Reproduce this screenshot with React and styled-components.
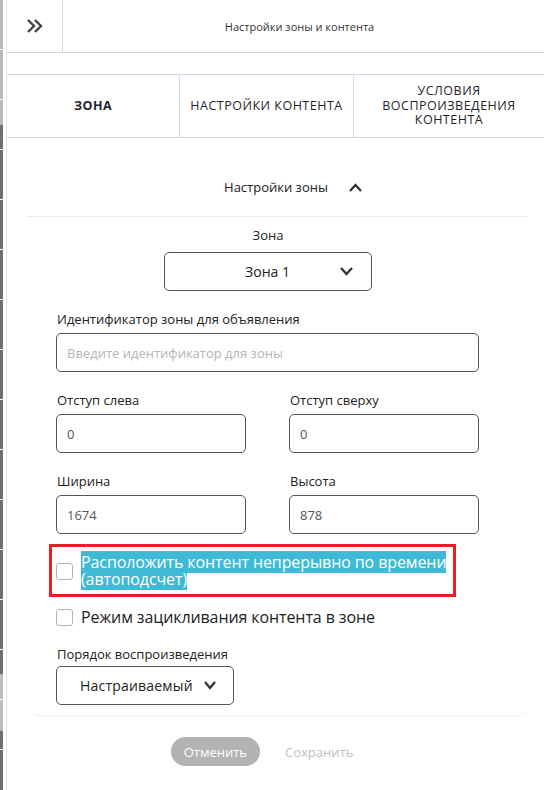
import React from 'react';
import styled, { createGlobalStyle } from 'styled-components';

const GlobalStyle = createGlobalStyle`
	body {
		margin: 0;
		background: #fff;
		font-family: "Open Sans", "Liberation Sans", sans-serif;
		color: #222;
	}
`;

const Page = styled.div`
	display: flex;
	min-height: 790px;
`;

// strip of the window lying behind the panel
const Rail = styled.div`
	width: 3px;
	margin-right: 3px;
	background:
		repeating-linear-gradient(to bottom, transparent 0 49px, #fff 49px 50px),
		linear-gradient(to bottom, #b9b9b9 0 125px, #707070 125px 674px, #bdbdbd 674px 731px, #707070 731px);
`;

const Panel = styled.div`
	flex: 1;
	border-left: 1px solid #dde2ee;
	display: flex;
	flex-direction: column;
`;

const Header = styled.div`
	display: flex;
	height: 52px;
	border-bottom: 1px solid #d3d8e6;
`;

const ToggleCell = styled.div`
	width: 55px;
	border-right: 1px solid #d3d8e6;
	display: flex;
	align-items: center;
	justify-content: center;
	color: #444;
`;

const Title = styled.div`
	flex: 1;
	display: flex;
	align-items: center;
	justify-content: center;
	font-size: 11px;
	color: #333;
	padding-right: 8px;
`;

const Spacer = styled.div`
	height: 21px;
	border-bottom: 1px solid #d3d8e6;
`;

const Tabs = styled.div`
	display: grid;
	grid-template-columns: 173px 174px 1fr;
	height: 62px;
	border-bottom: 1px solid #d3d8e6;
`;

const Tab = styled.div`
	display: flex;
	align-items: center;
	justify-content: center;
	text-align: center;
	font-size: 12.5px;
	line-height: 14.5px;
	text-transform: uppercase;
	font-weight: ${({ $active }) => ($active ? 700 : 400)};
	color: #1f1f2e;
	border-right: ${({ $last }) => ($last ? 'none' : '1px solid #d3d8e6')};
	letter-spacing: 0.5px;
`;

const Card = styled.div`
	margin: 0 15px 0 20px;
	border-radius: 12px;
	box-shadow: 0 2px 2px -1px rgba(0, 0, 0, 0.08);
`;

const SectionHead = styled.div`
	display: flex;
	align-items: center;
	justify-content: center;
	gap: 21px;
	padding: 40px 0 20px 30px;
	line-height: 18px;
	font-size: 13px;
	border-bottom: 1px solid #ececec;
	color: #222;
`;

const CardBody = styled.div`
	padding: 10px 50px 10px 29px;
	display: flex;
	flex-direction: column;
`;

const Field = styled.div`
	display: flex;
	flex-direction: column;
	align-items: ${({ $center }) => ($center ? 'center' : 'stretch')};
	margin-bottom: 20px;
`;

const Label = styled.label`
	font-size: 13px;
	line-height: 16px;
	margin-bottom: ${({ $gap }) => $gap || 6}px;
	padding-left: 1px;
	color: #222;
`;

const Row = styled.div`
	display: grid;
	grid-template-columns: 1fr 1fr;
	column-gap: 43px;
`;

const Input = styled.input`
	box-sizing: border-box;
	height: 39px;
	width: 100%;
	border: 1px solid #555;
	border-radius: 5px;
	padding: 0 10px;
	font-family: "Open Sans", "Liberation Sans", sans-serif;
	font-size: 13px;
	color: #555;
	outline: none;
	&::placeholder {
		color: #b5b5b5;
	}
`;

const ZoneSelect = styled.div`
	box-sizing: border-box;
	width: 208px;
	height: 39px;
	border: 1px solid #555;
	border-radius: 5px;
	display: grid;
	grid-template-columns: 1fr auto 1fr;
	align-items: center;
	font-size: 14px;
	color: #222;
	svg {
		justify-self: end;
		margin-right: 18px;
	}
`;

const OrderSelect = styled.div`
	box-sizing: border-box;
	width: 178px;
	height: 39px;
	border: 1px solid #555;
	border-radius: 5px;
	display: flex;
	align-items: center;
	gap: 11px;
	padding-left: 23px;
	font-size: 14px;
	letter-spacing: 0.2px;
	color: #222;
`;

const Annotated = styled.div`
	box-sizing: border-box;
	width: 407px;
	margin: -10px 0 0 -7px;
	border: 3px solid #ec1c24;
	padding: 7px 4px 6px 4px;
`;

const CheckRow = styled.div`
	display: flex;
	align-items: center;
	gap: 8px;
	font-size: 16px;
	line-height: 17px;
	letter-spacing: -0.1px;
	margin-bottom: ${({ $mb }) => $mb || 0}px;
	margin-top: ${({ $mt }) => $mt || 0}px;
`;

const Box = styled.span`
	flex: none;
	box-sizing: border-box;
	width: 17px;
	height: 17px;
	border: 1px solid #b3b3b3;
	border-radius: 3px;
	background: #fff;
`;

const Selected = styled.span`
	background: #3fbad6;
	color: #fff;
`;

const Buttons = styled.div`
	display: flex;
	justify-content: center;
	gap: 12px;
	margin: 22px 15px 0 20px;
	padding: 0 50px 0 31px;
`;

const Button = styled.button`
	height: 29px;
	padding: 0 13px;
	border: none;
	border-radius: 15px;
	font-family: "Open Sans", "Liberation Sans", sans-serif;
	font-size: 13px;
	background: ${({ $filled }) => ($filled ? '#b3b3b3' : 'transparent')};
	color: ${({ $filled }) => ($filled ? '#fff' : '#c0c0c0')};
`;

const ChevronsRight = () => (
	<svg width="17" height="14" viewBox="0 0 17 14" fill="none" stroke="currentColor" strokeWidth="2.4" strokeLinejoin="miter">
		<polyline points="2,1 8,7 2,13" />
		<polyline points="9,1 15,7 9,13" />
	</svg>
);

const Chevron = ({ up, w = 12, h = 7 }) => (
	<svg width={w} height={h + 2} viewBox={`0 0 ${w} ${h + 2}`} fill="none" stroke="#333" strokeWidth="2.3">
		{up ? (
			<polyline points={`1,${h + 1} ${w / 2},2 ${w - 1},${h + 1}`} />
		) : (
			<polyline points={`1,1 ${w / 2},${h} ${w - 1},1`} />
		)}
	</svg>
);

const App = () => (
	<>
		<GlobalStyle />
		<Page>
			<Rail />
			<Panel>
				<Header>
					<ToggleCell>
						<ChevronsRight />
					</ToggleCell>
					<Title>Настройки зоны и контента</Title>
				</Header>
				<Spacer />
				<Tabs>
					<Tab $active>Зона</Tab>
					<Tab>Настройки контента</Tab>
					<Tab $last>
						Условия
						<br />
						воспроизведения
						<br />
						контента
					</Tab>
				</Tabs>
				<Card>
					<SectionHead>
						<span>Настройки зоны</span>
						<Chevron up w={13} h={7} />
					</SectionHead>
					<CardBody>
						<Field $center>
							<Label $gap={9}>Зона</Label>
							<ZoneSelect>
								<span />
								<span>Зона 1</span>
								<Chevron w={13} h={7} />
							</ZoneSelect>
						</Field>
						<Field>
							<Label>Идентификатор зоны для объявления</Label>
							<Input placeholder="Введите идентификатор для зоны" />
						</Field>
						<Row>
							<Field>
								<Label>Отступ слева</Label>
								<Input readOnly value="0" />
							</Field>
							<Field>
								<Label>Отступ сверху</Label>
								<Input readOnly value="0" />
							</Field>
						</Row>
						<Row>
							<Field>
								<Label>Ширина</Label>
								<Input readOnly value="1674" />
							</Field>
							<Field>
								<Label>Высота</Label>
								<Input readOnly value="878" />
							</Field>
						</Row>
						<Annotated>
							<CheckRow>
								<Box />
								<span>
									<Selected>Расположить контент непрерывно по времени (автоподсчет)</Selected>
								</span>
							</CheckRow>
						</Annotated>
						<CheckRow $mt={12} $mb={20}>
							<Box />
							<span>Режим зацикливания контента в зоне</span>
						</CheckRow>
						<Label $gap={4}>Порядок воспроизведения</Label>
						<OrderSelect>
							<span>Настраиваемый</span>
							<Chevron w={12} h={7} />
						</OrderSelect>
					</CardBody>
				</Card>
				<Buttons>
					<Button $filled>Отменить</Button>
					<Button>Сохранить</Button>
				</Buttons>
			</Panel>
		</Page>
	</>
);

export default App;
